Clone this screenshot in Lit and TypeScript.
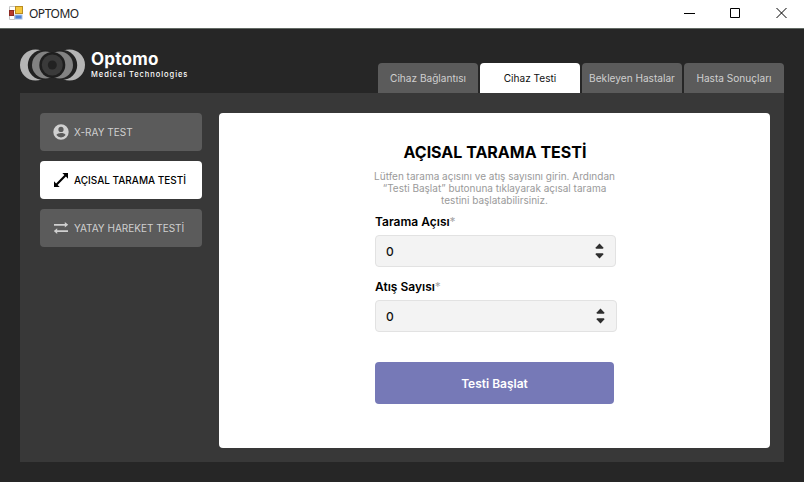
import { LitElement, html, svg, css } from "lit";
import { customElement, property } from "lit/decorators.js";
import { classMap } from "lit/directives/class-map.js";

@customElement("number-field")
class NumberField extends LitElement {
  @property() label = "";
  @property({ type: Number }) value = 0;

  static styles = css`
    :host { display: block; }
    .label { font-size: 12px; line-height: 16px; font-weight: 600; color: #000; letter-spacing: 0; white-space: nowrap; }
    .star { color: #a6a6a6; font-weight: 400; }
    .box {
      box-sizing: border-box; height: 32px; margin-top: 5px; padding: 0 11px 0 10px;
      border: 1px solid #e2e2e2; border-radius: 4px; background: #f3f3f3;
      display: flex; align-items: center; justify-content: space-between;
      font-size: 12px; font-weight: 500; color: #111;
    }
    .digits { padding-top: 1px; }
    svg { display: block; }
  `;

  render() {
    return html`
      <div class="label">${this.label}<span class="star">*</span></div>
      <div class="box">
        <span class="digits">${this.value}</span>
        <svg width="9" height="16" viewBox="0 0 9 16" fill="#2e2e2e">
          <path d="M4.500 .6 8.300 4.400Q8.600 5.800 7.600 5.800H1.400Q.4 5.800 .7 4.400Z" />
          <path d="M4.500 15.400 8.300 11.600Q8.600 10.200 7.600 10.200H1.400Q.4 10.200 .7 11.600Z" />
        </svg>
      </div>
    `;
  }
}

const icons = {
  user: svg`<path fill-rule="evenodd" d="M8 .3a7.700 7.700 0 1 0 0 15.400 7.700 7.700 0 0 0 0-15.400Zm0 2.500a2.600 2.600 0 1 1 0 5.200 2.600 2.600 0 0 1 0-5.200Zm0 10.700a5.500 5.500 0 0 1-4.600-2.400C3.500 9.600 6.500 8.900 8 8.900s4.500.7 4.600 2.200A5.500 5.500 0 0 1 8 13.500Z" />`,
  diagonal: svg`<path d="M9.300 1H15v5.700l-2.100-2.100-8.300 8.300 2.100 2.100H1V9.300l2.100 2.100 8.300-8.300Z" />`,
  swap: svg`<path d="M1 3.900h10.800V2L15.200 4.800l-3.400 2.800V5.700H1ZM15 10.200H4.200V8.300L.8 11.100l3.400 2.800V12H15Z" />`,
};

@customElement("app-root")
class AppRoot extends LitElement {
  static styles = css`
    :host {
      display: flex; flex-direction: column; width: 804px; height: 482px;
      background: #262626; font-family: Inter, sans-serif; overflow: hidden;
    }
    svg { display: block; flex: none; }
    .titlebar {
      box-sizing: border-box; height: 29px; flex: none; background: #fff; border-bottom: 1px solid #626a64;
      display: flex; align-items: center; justify-content: space-between; padding: 0 17px 2px 9px;
    }
    .caption { display: flex; align-items: center; gap: 5px; font: 12px "Noto Sans", sans-serif; letter-spacing: -0.5px; color: #222; }
    .header { height: 64px; flex: none; display: flex; justify-content: space-between; align-items: flex-end; padding: 0 20px; }
    .brand { display: flex; align-items: center; gap: 6px; align-self: flex-start; padding-top: 20px; color: #fff; }
    .name { font-size: 17px; line-height: 19px; font-weight: 700; letter-spacing: 0.25px; }
    .tagline { font-size: 7.500px; line-height: 11px; font-weight: 500; letter-spacing: 0.95px; white-space: nowrap; }
    .tabs { display: flex; gap: 2px; }
    .tab {
      width: 100px; height: 30px; border-radius: 4px 4px 0 0; background: #5b5b5b; color: #cfcfcf;
      display: flex; align-items: center; justify-content: center; font-size: 10.100px; white-space: nowrap;
    }
    .tab.on { background: #fff; color: #111; }
    .panel { height: 369px; box-sizing: border-box; margin: 0 20px; padding: 20px 14px 14px 20px; background: #383838; display: flex; gap: 17px; }
    .menu { width: 162px; flex: none; display: flex; flex-direction: column; gap: 10px; }
    .entry {
      height: 38px; box-sizing: border-box; border-radius: 4px; background: #5b5b5b; color: #d0d0d0; fill: #d0d0d0;
      display: flex; align-items: center; gap: 5px; padding-left: 13px; font-size: 10px; white-space: nowrap;
    }
    .entry.on { background: #fff; color: #000; fill: #000; font-weight: 500; }
    .card { flex: 1; box-sizing: border-box; background: #fff; border-radius: 4px; padding: 28px 0 0 155px; }
    .heading { width: 242px; text-align: center; font-size: 16px; line-height: 22px; font-weight: 700; white-space: nowrap; color: #000; }
    .hint { width: 241px; margin-top: 7px; text-align: center; font-size: 10px; line-height: 12px; color: #9a9a9a; white-space: nowrap; }
    .first { width: 241px; margin: 8px 0 0 1px; }
    .second { width: 242px; margin: 12px 0 0 1px; }
    .start {
      width: 239px; height: 42px; margin: 30px 0 0 1px; border-radius: 4px; background: #7679b7; color: #fff;
      display: flex; align-items: center; justify-content: center; font-size: 12px; font-weight: 600;
    }
  `;

  private tabs = ["Cihaz Bağlantısı", "Cihaz Testi", "Bekleyen Hastalar", "Hasta Sonuçları"];
  private entries = [
    { icon: icons.user, text: "X-RAY TEST" },
    { icon: icons.diagonal, text: "AÇISAL TARAMA TESTİ" },
    { icon: icons.swap, text: "YATAY HAREKET TESTİ" },
  ];

  render() {
    return html`
      <div class="titlebar">
        <div class="caption">
          <svg width="15" height="15" viewBox="0 0 15 15">
            <path d="M.5 .5h6v4h-6ZM.5 9.500h5v4h-5Z" fill="#fff" stroke="#c6c6c6" />
            <rect x=".5" y="4.500" width="4" height="5" fill="#b93a2c" stroke="#8c2a22" />
            <rect x="6.500" y=".5" width="7" height="7" fill="#f5c73c" stroke="#b98d22" />
            <rect x="6" y="9" width="7" height="4" fill="#4d82d8" stroke="#a9bfdf" />
          </svg>
          <span>OPTOMO</span>
        </div>
        <svg width="103" height="12" viewBox="0 0 103 12" fill="none" stroke="#000">
          <path d="M0 6.500h11M46.500 1.500h9v9h-9ZM92.500 1l10 10M102.500 1l-10 10" />
        </svg>
      </div>
      <div class="header">
        <div class="brand">
          <svg width="65" height="32" viewBox="0 0 65 32">
            <g fill="#b5b5b5"><circle cx="15.500" cy="16" r="15.500" /><circle cx="49.500" cy="16" r="15.500" /></g>
            <g fill="#222"><circle cx="22.800" cy="16" r="15" /><circle cx="42.200" cy="16" r="15" /></g>
            <g fill="#828282"><circle cx="25.500" cy="16" r="13.500" /><circle cx="39.500" cy="16" r="13.500" /></g>
            <circle cx="32.300" cy="16" r="13" fill="#1e1e1e" />
            <circle cx="32.300" cy="16" r="10.500" fill="#3a3a3a" />
            <circle cx="32.300" cy="16" r="4.500" fill="#222" />
          </svg>
          <div>
            <div class="name">Optomo</div>
            <div class="tagline">Medical Technologies</div>
          </div>
        </div>
        <div class="tabs">
          ${this.tabs.map((t, i) => html`<div class=${classMap({ tab: true, on: i === 1 })}>${t}</div>`)}
        </div>
      </div>
      <div class="panel">
        <div class="menu">
          ${this.entries.map(
            (e, i) => html`<div class=${classMap({ entry: true, on: i === 1 })}>
              <svg width="16" height="16" viewBox="0 0 16 16">${e.icon}</svg>
              <span>${e.text}</span>
            </div>`
          )}
        </div>
        <div class="card">
          <div class="heading">AÇISAL TARAMA TESTİ</div>
          <div class="hint">
            Lütfen tarama açısını ve atış sayısını girin. Ardından<br />“Testi Başlat” butonuna tıklayarak açısal tarama<br />testini başlatabilirsiniz.
          </div>
          <number-field class="first" label="Tarama Açısı"></number-field>
          <number-field class="second" label="Atış Sayısı"></number-field>
          <div class="start">Testi Başlat</div>
        </div>
      </div>
    `;
  }
}
